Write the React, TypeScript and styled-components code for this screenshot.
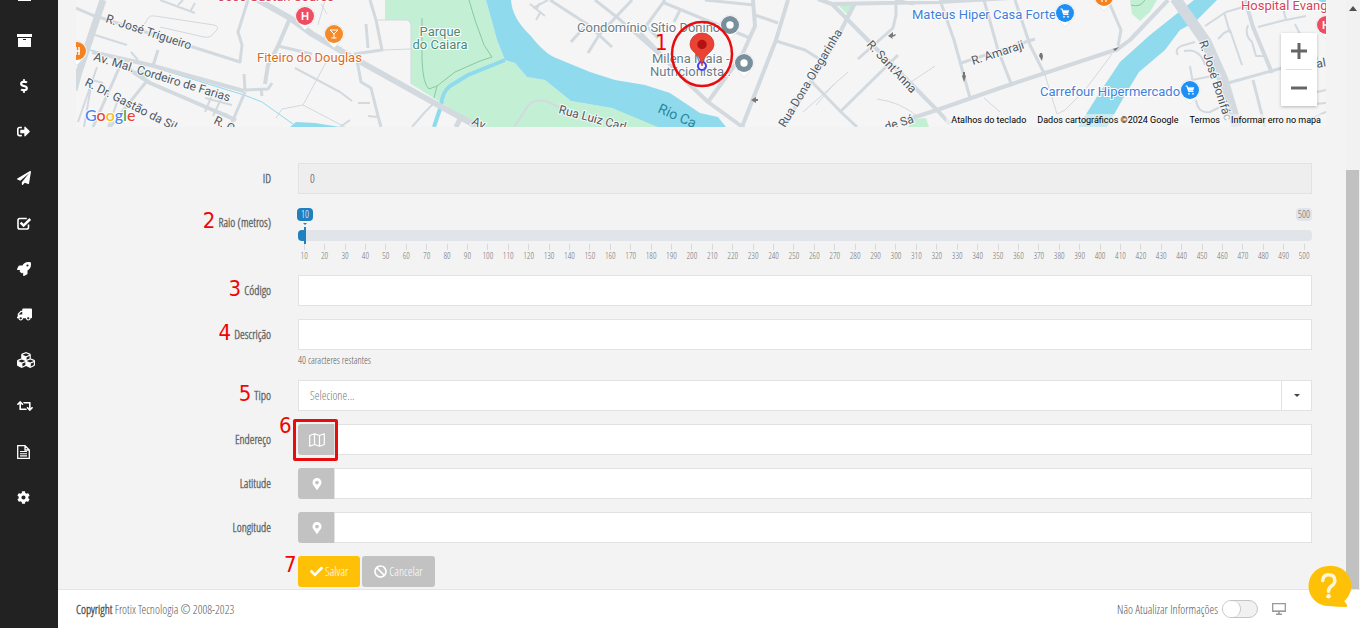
import React from "react";
import styled, { createGlobalStyle } from "styled-components";
import {
  FaDollarSign,
  FaSignOutAlt,
  FaPaperPlane,
  FaRocket,
  FaTruck,
  FaCubes,
  FaRetweet,
  FaCog,
  FaCheck,
  FaBan,
  FaMapMarkerAlt,
} from "react-icons/fa";

const GlobalStyle = createGlobalStyle`
  *, *::before, *::after { box-sizing: border-box; }
  body {
    margin: 0;
    background: #f3f3f3;
    color: #55585a;
    font-family: "Open Sans Condensed Light", "Open Sans Light Condensed", "Open Sans Cond Light", "Liberation Sans Narrow", "Open Sans", sans-serif;
    font-size: 12px;
  }
  input, select, button { font: inherit; color: inherit; }
`;

const Shell = styled.div`
  display: flex;
  height: 100vh;
  overflow: hidden;
`;

const Sidebar = styled.nav`
  flex: 0 0 58px;
  background: #222;
  overflow: hidden;
`;

const Menu = styled.ul`
  display: flex;
  flex-direction: column;
  height: 548px;
  margin: -28px 0 0;
  padding: 0;
  list-style: none;
`;

const MenuItem = styled.li`
  flex: 1;
  display: flex;
`;

const MenuLink = styled.a<{ $flip?: boolean }>`
  flex: 1;
  display: flex;
  align-items: center;
  padding-left: 17px;
  color: #fff;
  svg {
    transform: ${(p) => (p.$flip ? "scaleX(-1)" : "none")};
  }
`;

const Main = styled.div`
  flex: 1;
  min-width: 0;
  display: flex;
  flex-direction: column;
`;

const Viewport = styled.div`
  flex: 1;
  min-height: 0;
  display: flex;
  overflow: hidden;
`;

const Content = styled.main`
  flex: 1;
  min-width: 0;
  padding: 0 20px 0 18px;
`;

const ScrollRail = styled.div`
  flex: 0 0 14px;
  display: flex;
  flex-direction: column;
  align-items: center;
  gap: 159px;
  padding-top: 6px;
  background: #f1f1f1;
`;

const ScrollThumb = styled.div`
  flex: 1;
  width: 13px;
  align-self: flex-start;
  background: #c1c1c1;
`;

const MapBox = styled.section`
  position: relative;
  height: 127px;
  overflow: hidden;
  font-family: Roboto, sans-serif;
`;

const MapDrawing = styled.svg`
  display: block;
  width: 100%;
  height: 127px;
`;

const ZoomPanel = styled.div`
  position: absolute;
  top: 33px;
  right: 9px;
  width: 36px;
  display: flex;
  flex-direction: column;
  background: #fff;
  box-shadow: 0 1px 3px rgba(0, 0, 0, 0.25);
`;

const ZoomButton = styled.button`
  height: 36px;
  padding: 0;
  border: 0;
  background: none;
  display: flex;
  align-items: center;
  justify-content: center;
`;

const ZoomRule = styled.div`
  height: 1px;
  margin: 0 5px;
  background: #e0e0e0;
`;

const Credits = styled.div`
  position: absolute;
  right: 0;
  bottom: 0;
  height: 13px;
  display: flex;
  gap: 11px;
  padding: 0 5px;
  background: rgba(245, 245, 245, 0.6);
  font-size: 9px;
  line-height: 13px;
  color: #000;
`;

const CreditLink = styled.a`
  color: inherit;
  text-decoration: none;
`;

const Form = styled.form`
  display: flex;
  flex-direction: column;
  gap: 13px;
  padding: 36px 14px 0 0;
`;

const Row = styled.div`
  display: grid;
  grid-template-columns: 195px minmax(0, 1fr);
  column-gap: 27px;
`;

const LabelCell = styled.div`
  height: 31px;
  display: flex;
  align-items: center;
  justify-content: flex-end;
  gap: 3px;
`;

const Label = styled.label`
  font-size: 12px;
  font-weight: 700;
  color: #676a6c;
`;

const Mark = styled.span`
  color: #f00505;
  font-family: "DejaVu Sans Condensed", "DejaVu Sans", sans-serif;
  font-size: 22px;
  line-height: 24px;
`;

const RowMark = styled(Mark)`
  padding-bottom: 4px;
`;

const FloatingMark = styled(Mark)<{ $top: number; $left: number }>`
  position: absolute;
  top: ${(p) => p.$top}px;
  left: ${(p) => p.$left}px;
`;

const Field = styled.div`
  position: relative;
`;

const TextInput = styled.input`
  display: block;
  width: 100%;
  height: 31px;
  padding: 0 11px;
  border: 1px solid #e2e2e2;
  border-radius: 0;
  background: #fff;
  outline: none;
  &:disabled {
    background: #eee;
    color: #444;
  }
`;

const Hint = styled.div`
  height: 17px;
  padding-top: 4px;
  font-size: 10px;
  line-height: 12px;
`;

const Select = styled.select`
  display: block;
  width: 100%;
  height: 31px;
  padding: 0 11px;
  border: 1px solid #e2e2e2;
  border-radius: 0;
  background: #fff;
  color: #777;
  appearance: none;
`;

const CaretCell = styled.span`
  position: absolute;
  top: 1px;
  right: 1px;
  width: 30px;
  height: 29px;
  display: flex;
  align-items: center;
  justify-content: center;
  border-left: 1px solid #e2e2e2;
  pointer-events: none;
`;

const Group = styled.div`
  display: flex;
`;

const AddonButton = styled.button`
  flex: 0 0 36px;
  height: 31px;
  padding: 0 0 0 1px;
  display: flex;
  align-items: center;
  justify-content: center;
  border: 0;
  border-radius: 3px 0 0 3px;
  background: #c2c2c2;
  color: #fff;
`;

const Highlight = styled.span`
  position: absolute;
  top: -5px;
  left: -5px;
  width: 45px;
  height: 42px;
  border: 3px solid #e80c0c;
  border-radius: 2px;
  pointer-events: none;
`;

const Slider = styled.div`
  height: 55px;
  display: flex;
  flex-direction: column;
`;

const SliderTop = styled.div`
  display: flex;
  justify-content: space-between;
  padding-top: 1px;
  margin-left: -1px;
`;

const Badge = styled.output<{ $active?: boolean }>`
  position: relative;
  width: 16px;
  height: 13px;
  border-radius: 4px;
  background: ${(p) => (p.$active ? "#1f80c0" : "#e1e4e9")};
  color: ${(p) => (p.$active ? "#fff" : "#666")};
  font-size: 10px;
  line-height: 12px;
  text-align: center;
  &::after {
    content: "";
    display: ${(p) => (p.$active ? "block" : "none")};
    position: absolute;
    top: 15px;
    left: 6px;
    border: 2px solid transparent;
    border-top-color: #1f80c0;
    border-bottom: 0;
  }
`;

const Range = styled.input`
  appearance: none;
  display: block;
  width: 100%;
  height: 11px;
  margin: 9px 0 3px;
  padding: 0 6px;
  border-radius: 4px;
  background: linear-gradient(to right, #1f80c0 7px, #e1e4e9 7px);
  &::-webkit-slider-runnable-track {
    height: 11px;
  }
  &::-webkit-slider-thumb {
    appearance: none;
    width: 2px;
    height: 17px;
    margin-top: -3px;
    background: #1f80c0;
  }
`;

const Ticks = styled.div`
  display: flex;
  margin: 0 -2px 0 -4px;
`;

const Tick = styled.span`
  flex: 1 1 0;
  min-width: 0;
  display: flex;
  flex-direction: column;
  align-items: center;
  color: #777;
  font-size: 9px;
  line-height: 12px;
  &::before {
    content: "";
    width: 1px;
    height: 6px;
    background: #d9d9d9;
  }
`;

const Actions = styled.div`
  display: flex;
  gap: 2px;
`;

const ActionButton = styled.button<{ $primary?: boolean }>`
  height: 31px;
  padding: 0 12px;
  display: flex;
  align-items: center;
  gap: 2px;
  border: 0;
  border-radius: 3px;
  background: ${(p) => (p.$primary ? "#ffc107" : "#c2c2c2")};
  color: #fff;
`;

const Footer = styled.footer`
  flex: 0 0 39px;
  display: flex;
  align-items: center;
  justify-content: space-between;
  padding: 0 74px 0 18px;
  border-top: 1px solid #e4e4e4;
  background: #fff;
`;

const FooterTools = styled.div`
  display: flex;
  align-items: center;
  gap: 4px;
`;

const Toggle = styled.input`
  appearance: none;
  width: 36px;
  height: 18px;
  margin: 0 10px 0 0;
  border: 1px solid #c4c4c4;
  border-radius: 9px;
  background: #f1f1f1;
  &::before {
    content: "";
    display: block;
    width: 18px;
    height: 16px;
    border-right: 1px solid #c4c4c4;
    border-radius: 9px;
    background: #fff;
  }
`;

const HelpButton = styled.button`
  position: fixed;
  right: 9px;
  bottom: 20px;
  width: 43px;
  height: 43px;
  padding: 0;
  border: 0;
  background: none;
`;

const ArchiveIcon = () => (
  <svg width="15" height="13" viewBox="0 0 15 13" fill="#fff">
    <path d="M0 0h15v3H0z" />
    <path fillRule="evenodd" d="M1 4h13v9H1zM6 5h3v1H6z" />
  </svg>
);

const CheckSquareIcon = () => (
  <svg width="15" height="13" viewBox="0 0 15 13" fill="none" stroke="#fff">
    <path d="M11.5 7.5v2.7q0 1.8-1.8 1.8H2.800Q1 12 1 10.200V3.300Q1 1.500 2.800 1.500h7" strokeWidth="1.6" />
    <path d="M3.600 5.600l3 3L13.200 2" strokeWidth="2.500" />
  </svg>
);

const FileIcon = () => (
  <svg width="13" height="14" viewBox="0 0 13 14" fill="none" stroke="#fff">
    <path d="M.7.700h7.300L12.300 5v8.300H.7zM8 .7V5h4.300" strokeWidth="1.300" />
    <path d="M3 6.500h7M3 8.700h7M3 10.900h7" strokeWidth="1.100" />
  </svg>
);

const MapIcon = () => (
  <svg width="16" height="14" viewBox="0 0 16 14" fill="none" stroke="#fff" strokeLinejoin="round">
    <path d="M.7 2.500L5.500.8l5 1.700L15.300.8v10.700l-4.800 1.700-5-1.700-4.800 1.700zM5.500.8v10.700M10.500 2.500v10.700" strokeWidth="1.200" />
  </svg>
);

const DesktopIcon = () => (
  <svg width="14" height="12" viewBox="0 0 14 12" fill="none" stroke="#999">
    <path d="M.7.7h12.600v7.600H.7z" strokeWidth="1.300" />
    <path d="M1 8.200h12M7 8.500V11M4 11.300h6" strokeWidth="1.600" />
  </svg>
);

const menu: { name: string; icon: React.ReactNode; flip?: boolean }[] = [
  { name: "Painel", icon: <ArchiveIcon /> },
  { name: "Cadastros", icon: <ArchiveIcon /> },
  { name: "Financeiro", icon: <FaDollarSign size={14} /> },
  { name: "Saídas", icon: <FaSignOutAlt size={13} /> },
  { name: "Envios", icon: <FaPaperPlane size={14} /> },
  { name: "Tarefas", icon: <CheckSquareIcon /> },
  { name: "Operações", icon: <FaRocket size={14} /> },
  { name: "Frota", icon: <FaTruck size={15} />, flip: true },
  { name: "Estoque", icon: <FaCubes size={18} /> },
  { name: "Trocas", icon: <FaRetweet size={16} /> },
  { name: "Relatórios", icon: <FileIcon /> },
  { name: "Configurações", icon: <FaCog size={13} /> },
];

/* width, path */
const roads: [number, string][] = [
  [7, "M103 0L78 75L74 90"],
  [3, "M76 8L92 15L240 62L242 45L238 32L248 0"],
  [2, "M95 35L127 45M160 0L195 13M190 12L195 3M178 5L183 0"],
  [1, "M143 27L148 18Q150 15 155 16L214 25Q220 27 216 31L211 36Q208 38 204 37L160 27"],
  [4, "M92 52L150 65L244 91"],
  [4, "M118 62L150 83L236 120"],
  [3, "M158 50L153 66M146 82L110 127M120 66L93 127M245 92L230 127"],
  [2, "M97 67L78 122M92 80L84 127M131 52L138 60M103 83L92 80M118 100L108 127M295 68L340 92"],
  [2, "M205 98L232 105M200 105L228 115M212 95L205 112M222 97L213 116"],
  [6, "M258 0L290 18L312 34L350 56L420 95L478 127"],
  [4, "M290 18L278 46L268 65L265 84"],
  [3, "M278 46L312 54M244 74L245 90L268 89L272 83M262 96L261 88"],
  [1, "M330 55L303 105L282 109L276 118M303 105L345 127M325 0L318 25M321 4L327 14"],
  [3, "M370 0L376 20L382 50L354 54M366 24L368 48"],
  [1, "M378 20L406 20Q411 20 411 25V84M382 50L411 49"],
  [3, "M356 55L361 82L371 88L378 116L381 127"],
  [2, "M358 103L370 103M368 116L378 117M340 92L352 101M412 127L425 112L434 103M350 120L340 127"],
  [5, "M462 115L456 127"],
  [2, "M514 127L528 106Q533 99 546 101L575 115"],
  [3, "M550 0L587 24L612 47M587 24L571 42M601 32L588 53"],
  [2, "M530 4L545 16M536 10L540 3M540 13L536 20M548 0L533 8"],
  [3, "M595 0L618 18L668 62M632 0L598 36M665 0L646 26L658 38"],
  [3, "M662 2L750 38M680 10L674 22M705 0L754 5"],
  [4, "M753 0L755 26L742 55L708 102M708 102L690 85L640 33M708 102L744 128"],
  [4, "M788 0L776 40L742 127"],
  [3, "M755 15L778 23M776 41L805 50L821 60L812 82L841 112L857 127"],
  [4, "M818 -1L832 4L940 2L1010 -2M832 4L848 20L937 110L950 124"],
  [4, "M855 3L832 48L812 80L783 127"],
  [3, "M841 111L898 55M858 59L893 28L896 15V2M895 0L914 4"],
  [1, "M803 112L848 72M816 105L834 84M911 82L935 66M877 99Q900 102 917 116M984 98L1000 112"],
  [4, "M900 122L937 110L1000 88L1115 50"],
  [3, "M940 0L954 40L970 98M1015 0L1030 45L1045 75"],
  [3, "M961 63L1035 39M984 0L998 50L1012 86"],
  [1, "M1045 75L1057 114L1065 110L1085 90L1112 54"],
  [3, "M1108 0L1121 30L1118 46"],
  [4, "M1168 0L1130 40L1115 51"],
  [11, "M1175 -2L1206 42L1223 80L1237 127"],
  [3, "M1228 83L1318 58M1253 80L1265 127"],
  [4, "M1245 0L1253 27L1272 73"],
  [2, "M1205 26L1226 12L1250 5M1218 39L1224 33L1230 30L1242 65M1230 33L1224 12"],
  [2, "M1178 55Q1174 50 1181 46L1195 42M1184 51Q1200 48 1205 65M1190 66L1193 84M1196 100Q1198 114 1210 112L1222 106M1192 80L1212 76M1248 25Q1244 35 1252 42L1256 56L1264 56"],
  [2, "M1258 27L1285 20M1282 4L1286 20L1306 16M1295 24L1300 34M1304 95L1326 90M1304 105L1326 103M1308 120L1326 112"],
];

const Pin = ({ x, y, color, children }: { x: number; y: number; color: string; children?: React.ReactNode }) => (
  <g transform={`translate(${x} ${y})`}>
    <path d="M-10 0A10 10 0 1 1 10 0Q10 5 5 9L0 14L-5 9Q-10 5 -10 0Z" fill="#fff" stroke="#d9d9d9" strokeWidth=".5" />
    <circle r="9" fill={color} />
    {children}
  </g>
);

const Cart = () => (
  <g fill="none" stroke="#fff">
    <path d="M-4.500-4H-3L-1.200 1.500H3.500" strokeWidth="1.100" />
    <path d="M-2.600-2.600H4L3 .4H-1.700Z" fill="#fff" strokeWidth=".4" />
    <circle cx="-1" cy="3.800" r=".7" fill="#fff" strokeWidth=".4" />
    <circle cx="3" cy="3.800" r=".7" fill="#fff" strokeWidth=".4" />
  </g>
);

const HMark = () => <path d="M-2.500-4V4M2.500-4V4M-2.500 0H2.500" stroke="#fff" strokeWidth="1.700" fill="none" />;

const RoadName = styled.text`
  font-size: 12px;
  fill: #4d5866;
  stroke: #f8f8f8;
  stroke-width: 2px;
  paint-order: stroke;
`;

const PlaceName = styled.text<{ $color: string }>`
  font-size: 13px;
  fill: ${(p) => p.$color};
  stroke: #fff;
  stroke-width: 2px;
  paint-order: stroke;
`;

const Logo = styled.text`
  font-family: Lato, sans-serif;
  font-size: 16px;
  font-weight: 500;
  stroke: #fff;
  stroke-width: 2px;
  paint-order: stroke;
`;

const CityMap = () => (
  <MapDrawing viewBox="76 0 1250 127" preserveAspectRatio="xMidYMid slice" role="img" aria-label="Mapa">
    <rect x="-1000" width="4000" height="127" fill="#f5f5f5" />
    <g fill="#c3f0d5">
      <path d="M385 0H486L497 40L505 60L515 63L527 77L545 80L571 101L612 108L662 127H480L411 84V24L407 20H385Z" />
      <path d="M1130 0H1157L1150 12L1140 21L1132 14Z" />
      <path d="M835 2H857L848 15Z" />
      <path d="M908 127L914 119L926 118L929 127Z" />
      <path d="M132 72L143 70L148 78L138 77Z" />
      <path d="M337 50L342 46V54Z" />
    </g>
    <g fill="none" stroke="#88c8a2" strokeWidth="1">
      <path d="M469 0L475 20L484 45L492 57L480 61L455 72L437 86L434 98M422 18V60Q423 84 429 89L437 86M1131 5Q1140 8 1145 0" />
    </g>
    <g fill="#90daee">
      <path d="M486 0H511Q512 18 530 35Q545 54 556 58L590 72L615 80L645 85L670 93L700 113L718 117L726 127H658L612 108L571 101L545 80L527 77L515 63L505 60L497 40Z" />
      <path d="M1194 0H1217L1195 22L1180 30L1165 50L1139 72L1125 95L1107 127H1078L1100 92L1120 62L1150 35Z" />
      <path d="M290 127L296 122L315 123L340 127Z" />
      <path d="M1318 0H1326V5Z" />
    </g>
    <g fill="none" stroke="#90daee">
      <path d="M505 60L468 75L450 86Q442 92 441 106L434 127" strokeWidth="4" />
      <path d="M90 50L140 63L244 95L262 102L293 124" strokeWidth="1" />
    </g>
    <g fill="none" stroke="#d2d9df" strokeLinejoin="round">
      {roads.map(([w, d]) => (
        <path key={d} d={d} strokeWidth={w} />
      ))}
    </g>
    <g fill="#777">
      <path d="M888 36l5-4v3l3-1-1 2-3 1 1 2z" />
      <path d="M962 76l2 6 2-6-1-1v-3h-2v3z" />
      <path d="M751 100l5-3v2h2v2h-2v2z" />
      <path d="M1039 56l3 5 1-5-1-3h-2z" />
      <path d="M1113 49l6-2-4 4z" />
    </g>

    <RoadName transform="translate(105 22) rotate(18)">R. José Trigueiro</RoadName>
    <RoadName transform="translate(93 60) rotate(17)">Av. Mal. Cordeiro de Farias</RoadName>
    <RoadName transform="translate(84 85) rotate(27)">R. Dr. Gastão da Sil</RoadName>
    <RoadName transform="translate(213 123) rotate(27)">R. C</RoadName>
    <RoadName transform="translate(471 124) rotate(24)">Av</RoadName>
    <RoadName transform="translate(558 113) rotate(15)">Rua Luiz Carl</RoadName>
    <RoadName transform="translate(785 128) rotate(-59)">Rua Dona Olegarinha</RoadName>
    <RoadName transform="translate(866 45) rotate(47)">R. Sant'Anna</RoadName>
    <RoadName transform="translate(973 65) rotate(-18)">R. Amaraji</RoadName>
    <RoadName transform="translate(1199 42) rotate(72)">R. José Bonifác</RoadName>
    <RoadName transform="translate(886 131) rotate(-17)">de Sá</RoadName>
    <RoadName transform="translate(1317 68) rotate(-10)">al</RoadName>
    <text transform="translate(657 112) rotate(24)" fontSize="14" fill="#28879c">Rio Ca</text>

    <PlaceName $color="#d6455a" x="218" y="1">José Gastan Soares</PlaceName>
    <PlaceName $color="#d96c1e" x="257" y="62">Fiteiro do Douglas</PlaceName>
    <PlaceName $color="#4d8a75" x="440" y="36" textAnchor="middle">Parque</PlaceName>
    <PlaceName $color="#4d8a75" x="440" y="49" textAnchor="middle">do Caiara</PlaceName>
    <PlaceName $color="#6b7c89" x="577" y="32">Condomínio Sítio Donino</PlaceName>
    <PlaceName $color="#6b7c89" x="652" y="63">Milena Maia -</PlaceName>
    <PlaceName $color="#6b7c89" x="650" y="76">Nutricionista..</PlaceName>
    <PlaceName $color="#3f7fdc" x="912" y="19">Mateus Hiper Casa Forte</PlaceName>
    <PlaceName $color="#3f7fdc" x="1040" y="96">Carrefour Hipermercado</PlaceName>
    <PlaceName $color="#d6455a" x="1241" y="10">Hospital Evang</PlaceName>

    <Pin x={305} y={16} color="#ee4d62"><HMark /></Pin>
    <Pin x={334} y={34} color="#f58a2a">
      <path d="M-4-4H4L0 0ZM0 0V4M-2.500 4H2.500" stroke="#fff" strokeWidth="1" fill="none" />
    </Pin>
    <Pin x={77} y={51} color="#f58220"><path d="M-1-4V4M2-4V4M-1 0H3" stroke="#fff" strokeWidth="1.500" /></Pin>
    <Pin x={730} y={25} color="#78909c"><circle r="3.700" fill="#fff" /></Pin>
    <Pin x={744} y={63} color="#78909c"><circle r="3.700" fill="#fff" /></Pin>
    <Pin x={1065} y={13} color="#1e90f5"><Cart /></Pin>
    <Pin x={1190} y={90} color="#1e90f5"><Cart /></Pin>
    <Pin x={1104} y={-3} color="#f58220"><path d="M-2-4V5M2-4V5M-4 0H0" stroke="#fff" strokeWidth="1.200" /></Pin>
    <Pin x={1326} y={25} color="#ee4d62"><HMark /></Pin>

    <Logo x="85" y="121">
      <tspan fill="#4285f4">G</tspan>
      <tspan fill="#ea4335">o</tspan>
      <tspan fill="#fbbc05">o</tspan>
      <tspan fill="#4285f4">g</tspan>
      <tspan fill="#34a853">l</tspan>
      <tspan fill="#ea4335">e</tspan>
    </Logo>

    <circle cx="702" cy="66" r="4" fill="none" stroke="#4a3cf0" strokeWidth="2" />
    <path d="M702 66Q701 58 695 53Q690 49 690 44.500A12 11.500 0 0 1 714 44.500Q714 49 709 53Q703 58 702 66Z" fill="#ea4335" stroke="#c5332a" strokeWidth=".7" />
    <circle cx="702" cy="44.500" r="4.700" fill="#b11313" />
    <ellipse cx="702" cy="54" rx="30" ry="32" fill="none" stroke="#e80c0c" strokeWidth="2.500" />
    <text x="655" y="50" fontFamily="DejaVu Sans Condensed, DejaVu Sans" fontSize="22" fill="#f00505">1</text>
  </MapDrawing>
);

const tickValues = Array.from({ length: 50 }, (_, i) => (i + 1) * 10);

export default function App() {
  return (
    <Shell>
      <GlobalStyle />
      <Sidebar aria-label="Menu principal">
        <Menu>
          {menu.map((m) => (
            <MenuItem key={m.name}>
              <MenuLink href="#" aria-label={m.name} $flip={m.flip}>
                {m.icon}
              </MenuLink>
            </MenuItem>
          ))}
        </Menu>
      </Sidebar>
      <Main>
        <Viewport>
          <Content>
            <MapBox>
              <CityMap />
              <ZoomPanel>
                <ZoomButton type="button" aria-label="Aumentar zoom">
                  <svg width="16" height="16" viewBox="0 0 16 16"><path d="M0 8H16M8 0V16" stroke="#666" strokeWidth="3" /></svg>
                </ZoomButton>
                <ZoomRule />
                <ZoomButton type="button" aria-label="Diminuir zoom">
                  <svg width="16" height="16" viewBox="0 0 16 16"><path d="M0 8H16" stroke="#666" strokeWidth="3" /></svg>
                </ZoomButton>
              </ZoomPanel>
              <Credits>
                <CreditLink href="#">Atalhos do teclado</CreditLink>
                <span>Dados cartográficos ©2024 Google</span>
                <CreditLink href="#">Termos</CreditLink>
                <CreditLink href="#">Informar erro no mapa</CreditLink>
              </Credits>
            </MapBox>
            <Form onSubmit={(e) => e.preventDefault()}>
              <Row>
                <LabelCell><Label htmlFor="id">ID</Label></LabelCell>
                <Field><TextInput id="id" defaultValue="0" disabled /></Field>
              </Row>
              <Row>
                <LabelCell><RowMark>2</RowMark><Label htmlFor="raio">Raio (metros)</Label></LabelCell>
                <Slider>
                  <SliderTop>
                    <Badge htmlFor="raio" $active>10</Badge>
                    <Badge>500</Badge>
                  </SliderTop>
                  <Range id="raio" type="range" min={10} max={500} step={10} defaultValue={10} />
                  <Ticks aria-hidden="true">
                    {tickValues.map((v) => <Tick key={v}>{v}</Tick>)}
                  </Ticks>
                </Slider>
              </Row>
              <Row>
                <LabelCell><RowMark>3</RowMark><Label htmlFor="codigo">Código</Label></LabelCell>
                <Field><TextInput id="codigo" /></Field>
              </Row>
              <Row>
                <LabelCell><RowMark>4</RowMark><Label htmlFor="descricao">Descrição</Label></LabelCell>
                <Field>
                  <TextInput id="descricao" maxLength={40} />
                  <Hint>40 caracteres restantes</Hint>
                </Field>
              </Row>
              <Row>
                <LabelCell><RowMark>5</RowMark><Label htmlFor="tipo">Tipo</Label></LabelCell>
                <Field>
                  <Select id="tipo" defaultValue="">
                    <option value="">Selecione...</option>
                  </Select>
                  <CaretCell>
                    <svg width="6" height="3" viewBox="0 0 6 3"><path d="M0 0H6L3 3Z" fill="#444" /></svg>
                  </CaretCell>
                </Field>
              </Row>
              <Row>
                <LabelCell><Label htmlFor="endereco">Endereço</Label></LabelCell>
                <Field>
                  <Group>
                    <AddonButton type="button" aria-label="Abrir mapa"><MapIcon /></AddonButton>
                    <TextInput id="endereco" />
                  </Group>
                  <Highlight />
                  <FloatingMark $top={-10} $left={-19}>6</FloatingMark>
                </Field>
              </Row>
              <Row>
                <LabelCell><Label htmlFor="latitude">Latitude</Label></LabelCell>
                <Group>
                  <AddonButton as="span"><FaMapMarkerAlt size={12} /></AddonButton>
                  <TextInput id="latitude" />
                </Group>
              </Row>
              <Row>
                <LabelCell><Label htmlFor="longitude">Longitude</Label></LabelCell>
                <Group>
                  <AddonButton as="span"><FaMapMarkerAlt size={12} /></AddonButton>
                  <TextInput id="longitude" />
                </Group>
              </Row>
              <Row>
                <span />
                <Field>
                  <Actions>
                    <ActionButton type="submit" $primary><FaCheck size={13} />Salvar</ActionButton>
                    <ActionButton type="button"><FaBan size={13} />Cancelar</ActionButton>
                  </Actions>
                  <FloatingMark $top={-3} $left={-14}>7</FloatingMark>
                </Field>
              </Row>
            </Form>
          </Content>
          <ScrollRail>
            <svg width="8" height="5" viewBox="0 0 8 5"><path d="M0 5L4 0L8 5Z" fill="#505050" /></svg>
            <ScrollThumb />
          </ScrollRail>
        </Viewport>
        <Footer>
          <span><strong>Copyright</strong> Frotix Tecnologia © 2008-2023</span>
          <FooterTools>
            <label htmlFor="nao-atualizar">Não Atualizar Informações</label>
            <Toggle id="nao-atualizar" type="checkbox" role="switch" />
            <DesktopIcon />
          </FooterTools>
        </Footer>
      </Main>
      <HelpButton type="button" aria-label="Ajuda">
        <svg width="43" height="43" viewBox="0 0 44 44" fill="none">
          <path d="M21 1A20.500 20.500 0 1 0 21 42Q30 43 39 43Q42 42 37 37A20.500 20.500 0 0 0 21 1Z" fill="#ffc107" />
          <path d="M15 16Q15.500 10 21 10Q27.500 10 27.500 16Q27.500 19 24 21.500Q21 23.500 21 27" stroke="#fff6d8" strokeWidth="3.500" strokeLinecap="round" />
          <circle cx="21" cy="32" r="2.300" fill="#fff6d8" />
        </svg>
      </HelpButton>
    </Shell>
  );
}
